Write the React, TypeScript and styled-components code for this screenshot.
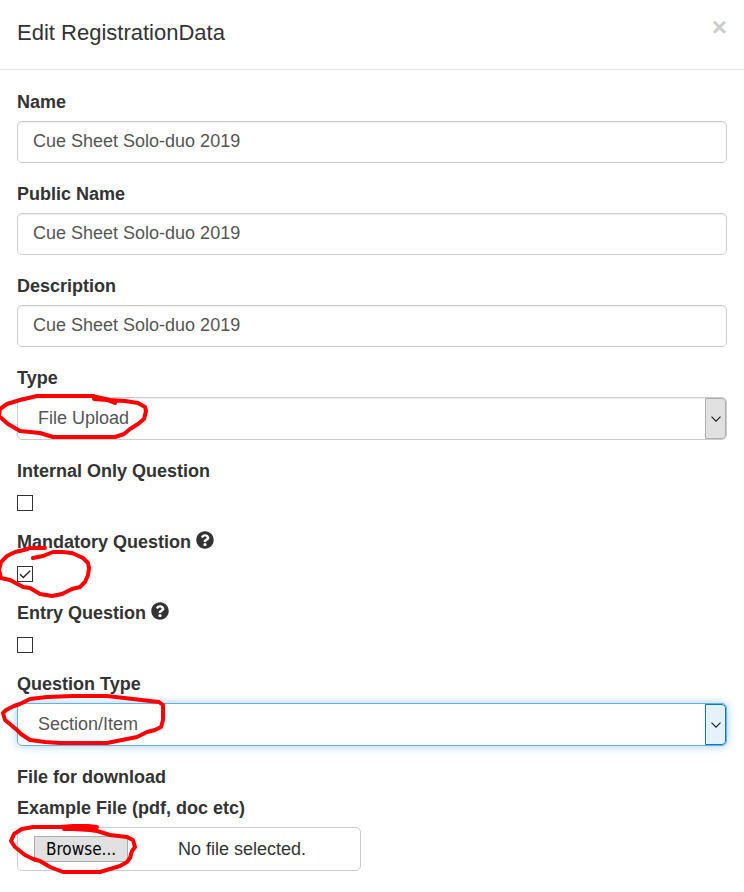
import React, { useRef, useState } from "react";
import styled, { createGlobalStyle, css } from "styled-components";
import { FaQuestionCircle } from "react-icons/fa";

const GlobalStyle = createGlobalStyle`
  *, *::before, *::after { box-sizing: border-box; }
  body {
    margin: 0;
    background: #fff;
    color: #333;
    font-family: "Liberation Sans", Arial, Helvetica, sans-serif;
    font-size: 18px;
    line-height: 24px;
  }
  input, select, button { font: inherit; }
`;

const Dialog = styled.main`
  position: relative;
  overflow: hidden;
`;

const Header = styled.header`
  display: flex;
  justify-content: space-between;
  align-items: flex-start;
  padding: 15px 17px 18px;
  border-bottom: 1px solid #e5e5e5;
`;

const Title = styled.h1`
  margin: 0;
  font-size: 22px;
  font-weight: 400;
  line-height: 36px;
`;

const CloseButton = styled.button`
  padding: 0;
  border: 0;
  background: none;
  color: #ccc;
  font-size: 26px;
  font-weight: 700;
  line-height: 24px;
  cursor: pointer;
`;

const Form = styled.form`
  display: flex;
  flex-direction: column;
  gap: 19px;
  padding: 20px 17px;
`;

const Field = styled.div<{ $gap?: number }>`
  display: flex;
  flex-direction: column;
  align-items: stretch;
  gap: ${({ $gap = 7 }) => $gap}px;
`;

const Label = styled.label`
  display: flex;
  align-items: center;
  gap: 5px;
  font-weight: 700;
`;

const Subheading = styled.div`
  font-weight: 700;
`;

const HelpIcon = styled(FaQuestionCircle)`
  width: 18px;
  height: 18px;
  margin-bottom: 4px;
`;

const control = css`
  width: 100%;
  border: 1px solid #ccc;
  border-radius: 5px;
  background: #fff;
  color: #555;
  outline: none;
`;

const TextInput = styled.input`
  ${control}
  height: 42px;
  padding: 0 15px 2px;
  box-shadow: inset 0 1px 1px rgba(0, 0, 0, 0.075);
`;

const SelectBox = styled.div<{ $active?: boolean }>`
  ${control}
  display: grid;
  grid-template-columns: 1fr 21px;
  height: 43px;
  overflow: hidden;
  border-color: ${({ $active }) => ($active ? "#66afe9" : "#ccc")};
  box-shadow: ${({ $active }) =>
    $active
      ? "0 0 10px rgba(102, 175, 233, 0.6)"
      : "inset 0 1px 1px rgba(0, 0, 0, 0.075)"};
`;

const NativeSelect = styled.select`
  grid-area: 1 / 1 / 2 / 3;
  appearance: none;
  width: 100%;
  padding: 0 42px 2px 20px;
  border: 0;
  background: transparent;
  color: #555;
  outline: none;
`;

const SelectArrow = styled.span<{ $active?: boolean }>`
  grid-area: 1 / 2 / 2 / 3;
  display: flex;
  align-items: center;
  justify-content: center;
  border: 1px solid ${({ $active }) => ($active ? "#0078d7" : "#adadad")};
  border-radius: 0 4px 4px 0;
  background: ${({ $active }) => ($active ? "#e5f1fb" : "#e1e1e1")};
  pointer-events: none;
`;

const CheckHolder = styled.span`
  display: grid;
  width: 16px;
  height: 16px;
  > * { grid-area: 1 / 1; }
  svg { pointer-events: none; visibility: hidden; }
  input:checked + svg { visibility: visible; }
`;

const Checkbox = styled.input`
  appearance: none;
  width: 16px;
  height: 16px;
  margin: 0;
  border: 1px solid #333;
  background: #fff;
`;

const FileBox = styled.div`
  display: flex;
  align-items: center;
  gap: 50px;
  width: 344px;
  max-width: 100%;
  height: 44px;
  padding: 0 16px;
  border: 1px solid #ccc;
  border-radius: 5px;
`;

const BrowseButton = styled.button`
  width: 94px;
  height: 26px;
  padding: 0;
  border: 1px solid #adadad;
  background: #e1e1e1;
  color: #000;
  font-family: "DejaVu Sans Condensed", "Noto Sans", sans-serif;
  font-size: 17px;
  line-height: 24px;
`;

const Marks = styled.svg`
  position: absolute;
  top: 0;
  left: 0;
  pointer-events: none;
  fill: none;
  stroke: #f00;
  stroke-width: 4;
  stroke-linecap: round;
  stroke-linejoin: round;
`;

function TextField({ id, label, value }: { id: string; label: string; value: string }) {
  return (
    <Field>
      <Label htmlFor={id}>{label}</Label>
      <TextInput id={id} type="text" defaultValue={value} />
    </Field>
  );
}

function SelectField({ id, label, value, active }: { id: string; label: string; value: string; active?: boolean }) {
  return (
    <Field>
      <Label htmlFor={id}>{label}</Label>
      <SelectBox $active={active}>
        <NativeSelect id={id} defaultValue={value}>
          <option>{value}</option>
        </NativeSelect>
        <SelectArrow $active={active}>
          <svg width="10" height="6" viewBox="0 0 10 6" fill="none" stroke="#222" strokeWidth="1.2">
            <path d="M0.5 0.7 5 5.2 9.5 0.7" />
          </svg>
        </SelectArrow>
      </SelectBox>
    </Field>
  );
}

function CheckField({ id, label, checked, help }: { id: string; label: string; checked?: boolean; help?: boolean }) {
  return (
    <Field $gap={12}>
      <Label htmlFor={id}>
        {label}
        {help && <HelpIcon aria-hidden="true" />}
      </Label>
      <CheckHolder>
        <Checkbox id={id} type="checkbox" defaultChecked={checked} />
        <svg width="16" height="16" viewBox="0 0 16 16" fill="none" stroke="#222" strokeWidth="1.3">
          <path d="M3 8.2 6.3 11.5 13.2 4.7" />
        </svg>
      </CheckHolder>
    </Field>
  );
}

function FileField() {
  const picker = useRef<HTMLInputElement>(null);
  const [name, setName] = useState("No file selected.");
  return (
    <Field>
      <Subheading>File for download</Subheading>
      <Label htmlFor="example-file">Example File (pdf, doc etc)</Label>
      <FileBox>
        <BrowseButton type="button" onClick={() => picker.current?.click()}>
          Browse...
        </BrowseButton>
        <span>{name}</span>
        <input
          ref={picker}
          id="example-file"
          type="file"
          hidden
          onChange={(e) => setName(e.target.files?.[0]?.name ?? "No file selected.")}
        />
      </FileBox>
    </Field>
  );
}

export default function App() {
  return (
    <>
      <GlobalStyle />
      <Dialog>
        <Header>
          <Title>Edit RegistrationData</Title>
          <CloseButton type="button" aria-label="Close">×</CloseButton>
        </Header>
        <Form>
          <TextField id="name" label="Name" value="Cue Sheet Solo-duo 2019" />
          <TextField id="public-name" label="Public Name" value="Cue Sheet Solo-duo 2019" />
          <TextField id="description" label="Description" value="Cue Sheet Solo-duo 2019" />
          <SelectField id="type" label="Type" value="File Upload" />
          <CheckField id="internal" label="Internal Only Question" />
          <CheckField id="mandatory" label="Mandatory Question" checked help />
          <CheckField id="entry" label="Entry Question" help />
          <SelectField id="question-type" label="Question Type" value="Section/Item" active />
          <FileField />
        </Form>
        <Marks width="200" height="892" viewBox="0 0 200 892" aria-hidden="true">
          <path d="M115 403 107 400 94 399M94 396H37L20 400 7 404 0 409-1 416 8 424 20 431 40 433 53 437H115L124 434 130 429 138 424 144 419 146 411 145 407 138 403 125 401 110 400 92 396" />
          <path d="M45 548H30L24 550 15 552 7 556 1 562-1 570 1 578 10 580 23 587 30 588 40 594 52 596 62 594 72 589 80 587 85 582 88 575 89 568 88 563 83 558 72 553 62 552H53L43 556 33 558" />
          <path d="M20 704 30 699 47 697 73 696H107L133 699 150 701 159 702 163 705V720L161 727 155 730 147 732 137 737 107 743H60L45 742 30 740 21 734 17 730 5 720 3 713 6 710 14 706 20 704" />
          <path d="M97 827 88 826H73L60 827H33L22 829 14 834 11 841 15 847 25 855 33 859 40 861 50 867 63 872H100L120 866 127 862 130 858 132 851 135 847 133 840 127 837 110 835 97 831 90 830 73 829H64" />
        </Marks>
      </Dialog>
    </>
  );
}
